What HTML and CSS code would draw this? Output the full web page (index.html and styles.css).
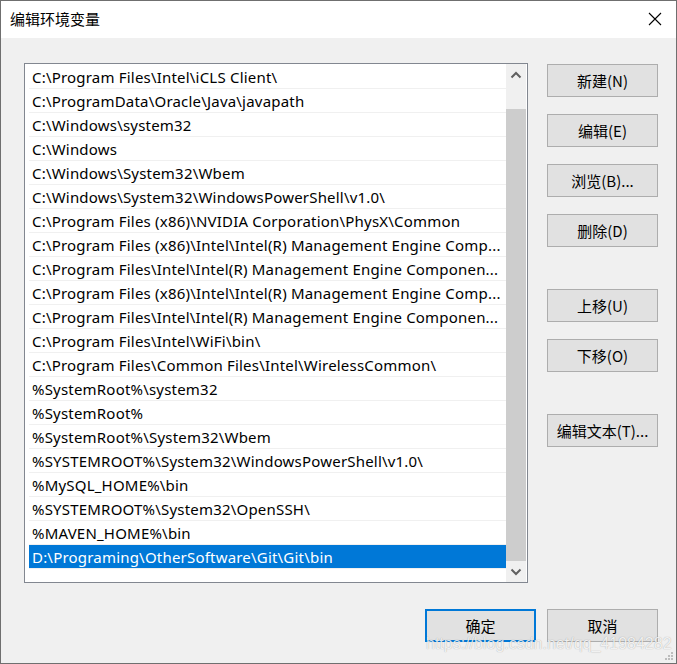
FILE: index.html
```html
<!DOCTYPE html>
<html lang="zh-CN">
<head>
<meta charset="utf-8">
<title>编辑环境变量</title>
<link rel="stylesheet" href="styles.css">
</head>
<body>
<div class="window">
  <div class="titlebar">
    <span class="title">编辑环境变量</span>
    <svg class="close" width="14" height="14" viewBox="0 0 14 14"><path d="M1 1 L13 13 M13 1 L1 13" stroke="#000" stroke-width="1.1" fill="none"/></svg>
  </div>
  <div class="content">
    <div class="main">
      <div class="listbox">
        <div class="rows">
          <div class="row">C:\Program Files\Intel\iCLS Client\</div>
          <div class="row">C:\ProgramData\Oracle\Java\javapath</div>
          <div class="row">C:\Windows\system32</div>
          <div class="row">C:\Windows</div>
          <div class="row">C:\Windows\System32\Wbem</div>
          <div class="row">C:\Windows\System32\WindowsPowerShell\v1.0\</div>
          <div class="row">C:\Program Files (x86)\NVIDIA Corporation\PhysX\Common</div>
          <div class="row">C:\Program Files (x86)\Intel\Intel(R) Management Engine Comp...</div>
          <div class="row">C:\Program Files\Intel\Intel(R) Management Engine Componen...</div>
          <div class="row">C:\Program Files (x86)\Intel\Intel(R) Management Engine Comp...</div>
          <div class="row">C:\Program Files\Intel\Intel(R) Management Engine Componen...</div>
          <div class="row">C:\Program Files\Intel\WiFi\bin\</div>
          <div class="row">C:\Program Files\Common Files\Intel\WirelessCommon\</div>
          <div class="row">%SystemRoot%\system32</div>
          <div class="row">%SystemRoot%</div>
          <div class="row">%SystemRoot%\System32\Wbem</div>
          <div class="row">%SYSTEMROOT%\System32\WindowsPowerShell\v1.0\</div>
          <div class="row">%MySQL_HOME%\bin</div>
          <div class="row">%SYSTEMROOT%\System32\OpenSSH\</div>
          <div class="row">%MAVEN_HOME%\bin</div>
          <div class="row selected">D:\Programing\OtherSoftware\Git\Git\bin</div>
        </div>
        <div class="scrollbar">
          <div class="arrow">
            <svg width="12" height="8" viewBox="0 0 12 8"><path d="M1.5 6.5 L6 2 L10.5 6.5" stroke="#606060" stroke-width="2" fill="none"/></svg>
          </div>
          <div class="track"></div>
          <div class="thumb"></div>
          <div class="arrow">
            <svg width="12" height="8" viewBox="0 0 12 8"><path d="M1.5 1.5 L6 6 L10.5 1.5" stroke="#606060" stroke-width="2" fill="none"/></svg>
          </div>
        </div>
      </div>
      <div class="side">
        <div class="group">
          <button class="btn">新建(N)</button>
          <button class="btn">编辑(E)</button>
          <button class="btn">浏览(B)...</button>
          <button class="btn">删除(D)</button>
        </div>
        <div class="group">
          <button class="btn">上移(U)</button>
          <button class="btn">下移(O)</button>
        </div>
        <div class="group">
          <button class="btn">编辑文本(T)...</button>
        </div>
      </div>
    </div>
    <div class="footer">
      <button class="btn default">确定</button>
      <button class="btn">取消</button>
    </div>
  </div>
  <div class="watermark">https://blog.csdn.net/qq_41984282</div>
  <svg class="grip" width="10" height="10" viewBox="0 0 10 10">
    <rect x="7" y="1" width="2" height="2" fill="#bdbdbd"/>
    <rect x="4" y="4" width="2" height="2" fill="#bdbdbd"/>
    <rect x="7" y="4" width="2" height="2" fill="#bdbdbd"/>
    <rect x="1" y="7" width="2" height="2" fill="#bdbdbd"/>
    <rect x="4" y="7" width="2" height="2" fill="#bdbdbd"/>
    <rect x="7" y="7" width="2" height="2" fill="#bdbdbd"/>
  </svg>
</div>
</body>
</html>
```
FILE: styles.css
```css
html, body {
  margin: 0;
  padding: 0;
  background: #f0f0f0;
}
.window {
  position: relative;
  width: 677px;
  height: 664px;
  box-sizing: border-box;
  border: 1px solid #6f6f6f;
  background: #f0f0f0;
  display: flex;
  flex-direction: column;
  font-family: "Noto Sans", "Noto Sans CJK SC", sans-serif;
  font-size: 15px;
  color: #000;
  overflow: hidden;
}
.titlebar {
  height: 37px;
  background: #fff;
  display: flex;
  align-items: center;
  justify-content: space-between;
  padding: 0 14px 0 9px;
  flex: none;
}
.title {
  font-family: "Noto Sans CJK SC", sans-serif;
  font-size: 15px;
  line-height: 20px;
  margin-top: -1px;
}
.close {
  display: block;
  margin-top: -1px;
}
.content {
  padding: 25px 18px 0 23px;
  display: flex;
  flex-direction: column;
}
.main {
  display: flex;
  gap: 19px;
}
.listbox {
  width: 504px;
  height: 520px;
  box-sizing: border-box;
  border: 1px solid #828790;
  background: #fff;
  display: flex;
}
.rows {
  flex: 1;
  padding: 1px 0 0 4px;
  min-width: 0;
}
.row {
  height: 23px;
  line-height: 24px;
  border-bottom: 1px solid #f0f0f0;
  padding-left: 3px;
  white-space: nowrap;
  overflow: hidden;
  letter-spacing: 0.2px;
}
.row.selected {
  background: #0078d7;
  color: #fff;
}
.scrollbar {
  width: 20px;
  margin-right: 1px;
  background: #f0f0f0;
  display: flex;
  flex-direction: column;
}
.arrow {
  height: 21px;
  display: flex;
  align-items: center;
  justify-content: center;
  flex: none;
}
.track {
  flex: 1;
}
.thumb {
  height: 452px;
  background: #cdcdcd;
  flex: none;
}
.side {
  margin-top: 1px;
  width: 111px;
  display: flex;
  flex-direction: column;
  gap: 42px;
}
.group {
  display: flex;
  flex-direction: column;
  gap: 17px;
}
.btn {
  width: 111px;
  height: 33px;
  box-sizing: border-box;
  border: 1px solid #adadad;
  background: #e1e1e1;
  font-family: "Noto Sans CJK SC", sans-serif;
  font-size: 15px;
  color: #000;
  padding: 0;
  margin: 0;
  line-height: 20px;
}
.btn.default {
  border: 2px solid #0078d7;
}
.footer {
  margin-top: 26px;
  display: flex;
  justify-content: flex-end;
  gap: 11px;
  padding-right: 0;
}
.watermark {
  position: absolute;
  left: 425px;
  top: 634px;
  font-family: "Liberation Sans", Arial, sans-serif;
  font-size: 16px;
  line-height: 18px;
  color: rgba(255, 255, 255, 0.85);
  text-shadow: 0 0 1px rgba(0, 0, 0, 0.35);
  white-space: nowrap;
}
.grip {
  position: absolute;
  right: 2px;
  bottom: 2px;
}
```
